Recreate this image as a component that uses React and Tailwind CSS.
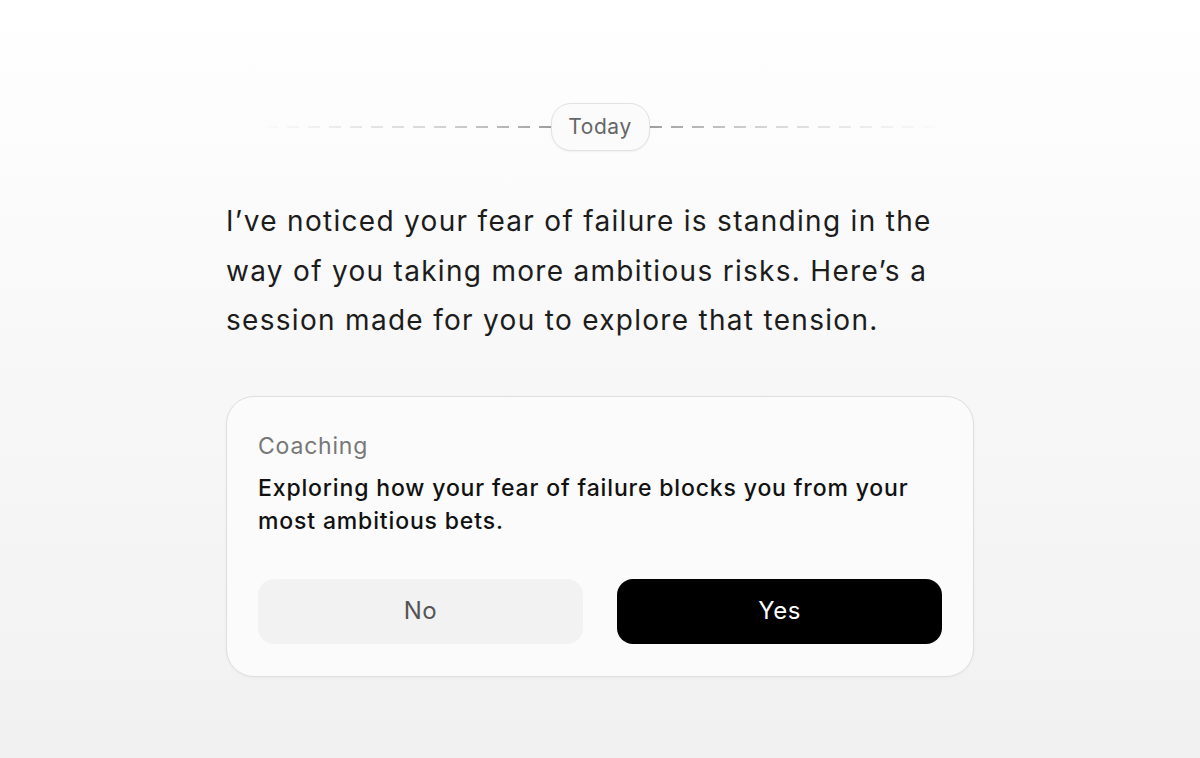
import React from "react";

function DashLine({ side }) {
  const id = `g-${side}`;
  const left = side === "left";
  return (
    <svg width="295" height="4" viewBox="0 0 295 4" className="block">
      <defs>
        <linearGradient
          id={id}
          gradientUnits="userSpaceOnUse"
          x1={left ? 0 : 295}
          y1="2"
          x2={left ? 295 : 0}
          y2="2"
        >
          <stop offset="0" stopColor="#9a9a9a" stopOpacity="0" />
          <stop offset="0.55" stopColor="#9a9a9a" stopOpacity="0.45" />
          <stop offset="1" stopColor="#808080" stopOpacity="1" />
        </linearGradient>
      </defs>
      <line
        x1={left ? 295 : 0}
        y1="2"
        x2={left ? 0 : 295}
        y2="2"
        stroke={`url(#${id})`}
        strokeWidth="1.3"
        strokeDasharray="12 9"
      />
    </svg>
  );
}

export default function App() {
  return (
    <div
      className="w-[1200px] h-[758px] overflow-hidden bg-[linear-gradient(180deg,#ffffff_0%,#f8f8f8_45%,#f1f1f1_100%)] flex flex-col items-center"
      style={{ fontFamily: "Inter, 'Noto Sans', sans-serif" }}
    >
      <div className="mt-[103px] flex items-center">
        <DashLine side="left" />
        <div className="h-[48px] w-[99px] rounded-[20px] border border-[#e2e2e2] bg-[#fbfbfb] shadow-[0_1px_2px_rgba(0,0,0,0.05)] flex items-center justify-center text-[21px] tracking-[0.6px] text-[#666666]">
          Today
        </div>
        <DashLine side="right" />
      </div>

      <div className="w-[748px] mt-[46px]">
        <p className="text-[28px] leading-[49.5px] text-[#1c1c1c] w-[720px] tracking-[1.3px]">
          I’ve noticed your fear of failure is standing in the way of you taking more ambitious risks. Here’s a session made for you to explore that tension.
        </p>

        <div className="mt-[50px] rounded-[28px] border border-[#dedede] bg-[#fbfbfb] px-[31px] pt-[33px] pb-[32px] shadow-[0_1px_3px_rgba(0,0,0,0.04)]">
          <div className="text-[23px] leading-[33px] tracking-[0.8px] text-[#777777]">Coaching</div>
          <div className="mt-[9px] text-[23px] leading-[33px] tracking-[0.85px] font-medium text-[#111111]">
            Exploring how your fear of failure blocks you from your most ambitious bets.
          </div>
          <div className="mt-[41px] flex gap-[34px]">
            <button className="flex-1 h-[65px] rounded-[16px] bg-[#f2f2f2] text-[24px] tracking-[0.5px] text-[#555555]">
              No
            </button>
            <button className="flex-1 h-[65px] rounded-[16px] bg-black text-[24px] tracking-[0.5px] text-white">
              Yes
            </button>
          </div>
        </div>
      </div>
    </div>
  );
}
